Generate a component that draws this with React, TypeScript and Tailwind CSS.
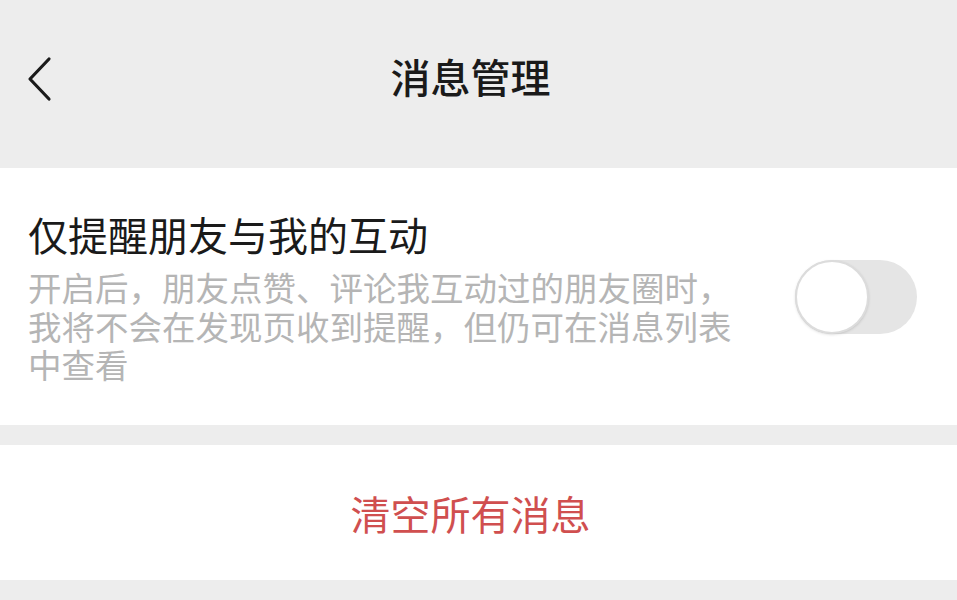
import { useState } from 'react';

const font = { fontFamily: '"Noto Sans CJK SC", "Noto Sans", sans-serif' };

function BackIcon() {
  return (
    <svg width="26" height="46" viewBox="0 0 26 46" fill="none">
      <path d="M23 3 L4 23 L23 43" stroke="#1b1b1b" strokeWidth="3.2" strokeLinecap="round" strokeLinejoin="round" />
    </svg>
  );
}

function Toggle({ on, onChange }: { on: boolean; onChange: (v: boolean) => void }) {
  return (
    <button
      onClick={() => onChange(!on)}
      className={`relative w-[122px] h-[74px] rounded-full shrink-0 ${on ? 'bg-[#07c160]' : 'bg-[#e5e5e5]'}`}
    >
      <span
        className={`absolute top-0 w-[74px] h-[74px] rounded-full bg-white border-2 border-[#dcdcdc] shadow-sm ${on ? 'left-[48px]' : 'left-0'}`}
      />
    </button>
  );
}

export default function App() {
  const [onlyFriends, setOnlyFriends] = useState(false);

  return (
    <div className="w-[957px] h-[600px] bg-[#ededed] flex flex-col overflow-hidden" style={font}>
      <header className="h-[168px] flex flex-col">
        <div className="h-[160px] relative flex items-center justify-center">
          <div className="absolute left-[26px] top-[56px]">
            <BackIcon />
          </div>
          <h1 className="text-[40px] leading-none font-medium text-[#1a1a1a] -mt-[8px] -ml-[16px]">消息管理</h1>
        </div>
      </header>

      <section className="bg-white h-[257px] flex items-start pl-[28px] pr-[40px] pt-[42px]">
        <div className="flex-1">
          <div className="text-[40px] leading-[48px] text-[#1a1a1a]">仅提醒朋友与我的互动</div>
          <p className="text-[33.5px] leading-[38.5px] text-[#b5b5b5] mt-[10px] w-[720px]">
            开启后，朋友点赞、评论我互动过的朋友圈时，我将不会在发现页收到提醒，但仍可在消息列表中查看
          </p>
        </div>
        <div className="mt-[50px]">
          <Toggle on={onlyFriends} onChange={setOnlyFriends} />
        </div>
      </section>

      <div className="h-[20px]" />

      <button className="bg-white h-[135px] flex items-center justify-center">
        <span className="text-[40px] leading-none text-[#d04f4f] -ml-[16px]">清空所有消息</span>
      </button>
    </div>
  );
}
